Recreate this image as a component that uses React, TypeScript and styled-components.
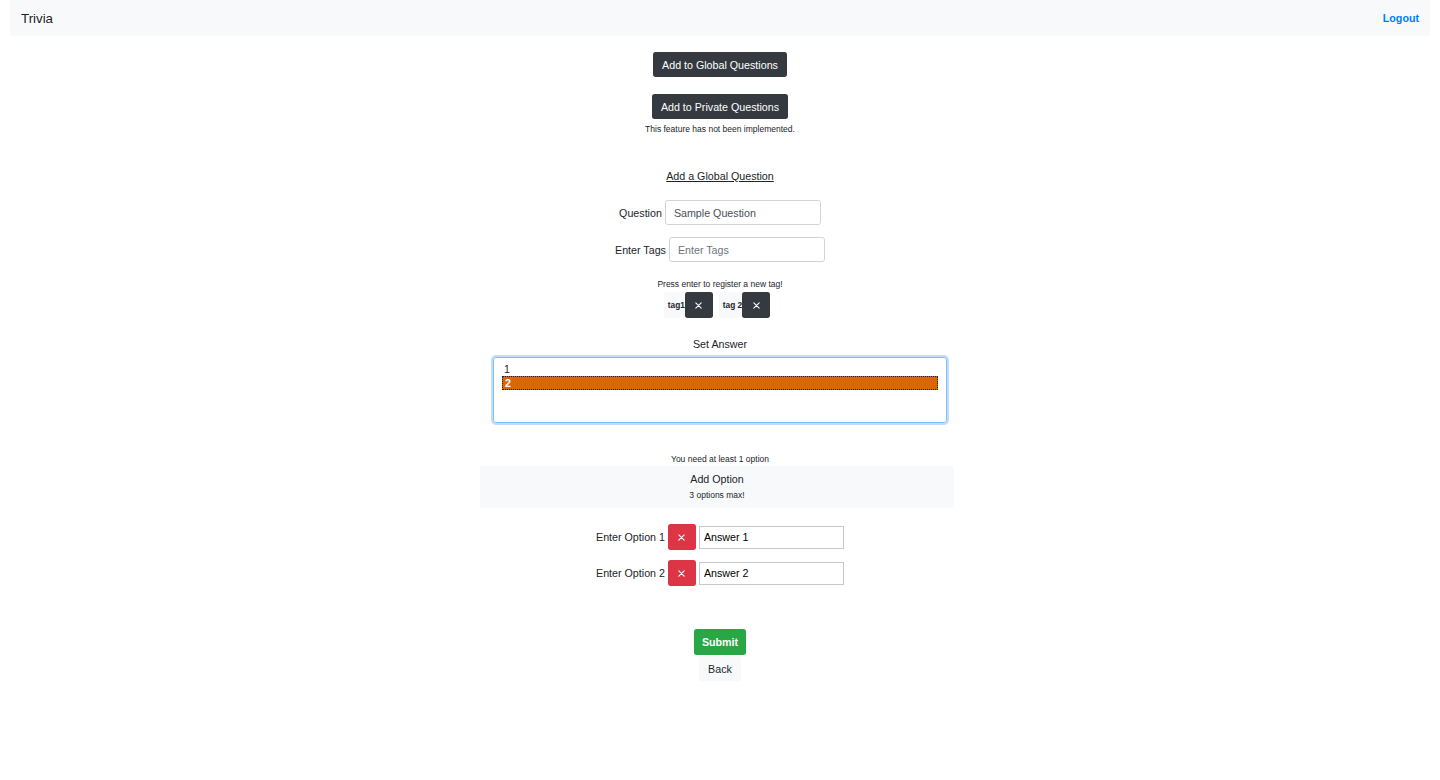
import React from 'react';
import styled, { createGlobalStyle } from 'styled-components';

const GlobalStyle = createGlobalStyle`
  html, body {
    margin: 0;
    padding: 0;
    background: #fff;
  }
  body {
    font-family: "Liberation Sans", Arial, sans-serif;
    font-size: 10.7px;
    color: #212529;
  }
`;

const Navbar = styled.nav`
  margin: 0 10px;
  height: 36px;
  background: #f8f9fa;
  display: flex;
  align-items: center;
  justify-content: space-between;
  padding: 0 11px;
`;

const Brand = styled.span`
  font-size: 13.3px;
  color: rgba(0, 0, 0, 0.9);
`;

const NavLink = styled.a`
  font-size: 10.7px;
  font-weight: 700;
  color: #007bff;
  text-decoration: none;
`;

const Main = styled.main`
  display: flex;
  flex-direction: column;
  align-items: center;
  padding-top: 16px;
`;

const Button = styled.button<{ variant?: 'dark' | 'danger' | 'success' | 'light'; mt?: number }>`
  border: none;
  border-radius: 2.7px;
  font-family: inherit;
  font-size: 10.7px;
  height: 25px;
  padding: 0 9px;
  margin-top: ${({ mt }) => mt ?? 0}px;
  cursor: pointer;
  display: inline-flex;
  align-items: center;
  justify-content: center;
  color: ${({ variant }) => (variant === 'light' ? '#212529' : '#fff')};
  background: ${({ variant }) =>
    variant === 'danger' ? '#dc3545' : variant === 'success' ? '#28a745' : variant === 'light' ? '#f8f9fa' : '#343a40'};
`;

const SubmitButton = styled(Button)`
  height: 26px;
  padding: 0 8px;
  font-weight: 700;
`;

const Small = styled.div<{ mt?: number }>`
  font-size: 8.5px;
  line-height: 12px;
  margin-top: ${({ mt }) => mt ?? 0}px;
`;

const SectionTitle = styled.div`
  margin-top: 33px;
  font-size: 10.7px;
  text-decoration: underline;
  line-height: 16px;
`;

const FieldRow = styled.div<{ mt: number }>`
  display: flex;
  align-items: center;
  gap: 3px;
  margin-top: ${({ mt }) => mt}px;
`;

const Label = styled.label`
  font-size: 10.7px;
`;

const TextInput = styled.input`
  width: 156px;
  height: 25px;
  box-sizing: border-box;
  border: 1px solid #ced4da;
  border-radius: 2.7px;
  padding: 0 8px;
  font-family: inherit;
  font-size: 10.7px;
  color: #495057;
  &::placeholder {
    color: #6c757d;
  }
`;

const TagList = styled.div`
  display: flex;
  gap: 6px;
  margin-top: 2px;
  margin-right: 6px;
`;

const Tag = styled.div`
  display: flex;
  align-items: center;
  background: #f8f9fa;
  border-radius: 2.7px;
  padding-left: 4px;
  font-size: 8.3px;
  font-weight: 700;
`;

const IconButton = styled(Button)`
  width: 28px;
  height: 26px;
  padding: 0;
`;

const SetAnswer = styled.div`
  margin-top: 19px;
  line-height: 14px;
`;

const ListBox = styled.div`
  margin-top: 6px;
  width: 454px;
  height: 66px;
  box-sizing: border-box;
  border: 1px solid #80bdff;
  border-radius: 3px;
  box-shadow: 0 0 0 2px rgba(0, 123, 255, 0.25);
  padding: 5px 8px;
  font-size: 10.7px;
  line-height: 13px;
`;

const ListOption = styled.div<{ selected?: boolean }>`
  padding-left: 2px;
  height: ${({ selected }) => (selected ? '14px' : '13px')};
  box-sizing: border-box;
  color: ${({ selected }) => (selected ? '#fff' : '#212529')};
  font-weight: ${({ selected }) => (selected ? 700 : 400)};
  background: ${({ selected }) => (selected ? '#d9670a' : 'transparent')};
  border: ${({ selected }) => (selected ? '1px dotted #0b1a6b' : 'none')};
  line-height: 12px;
`;

const AddOptionBox = styled.div`
  width: 474px;
  height: 42px;
  margin-top: 1px;
  margin-right: 6px;
  background: #f8f9fa;
  border-radius: 3px;
  display: flex;
  flex-direction: column;
  align-items: center;
  justify-content: center;
  gap: 4px;
`;

const OptionRow = styled.div<{ mt: number }>`
  display: flex;
  align-items: center;
  gap: 3px;
  margin-top: ${({ mt }) => mt}px;
`;

const PlainInput = styled.input`
  width: 145px;
  height: 23px;
  box-sizing: border-box;
  border: 1px solid #c8c8c8;
  padding: 0 4px;
  font-family: inherit;
  font-size: 10.7px;
  color: #000;
`;

const Cross = () => (
  <svg width="9" height="9" viewBox="0 0 10 10" fill="none" stroke="#fff" strokeWidth="1.2" strokeLinecap="round">
    <path d="M2 2 L8 8 M8 2 L2 8" />
  </svg>
);

export default function App() {
  return (
    <>
      <GlobalStyle />
      <Navbar>
        <Brand>Trivia</Brand>
        <NavLink href="#">Logout</NavLink>
      </Navbar>
      <Main>
        <Button variant="dark">Add to Global Questions</Button>
        <Button variant="dark" mt={17}>Add to Private Questions</Button>
        <Small mt={4}>This feature has not been implemented.</Small>
        <SectionTitle>Add a Global Question</SectionTitle>
        <FieldRow mt={16}>
          <Label>Question</Label>
          <TextInput defaultValue="Sample Question" />
        </FieldRow>
        <FieldRow mt={12}>
          <Label>Enter Tags</Label>
          <TextInput placeholder="Enter Tags" />
        </FieldRow>
        <Small mt={16}>Press enter to register a new tag!</Small>
        <TagList>
          <Tag>
            tag1
            <IconButton variant="dark"><Cross /></IconButton>
          </Tag>
          <Tag>
            tag 2
            <IconButton variant="dark"><Cross /></IconButton>
          </Tag>
        </TagList>
        <SetAnswer>Set Answer</SetAnswer>
        <ListBox>
          <ListOption>1</ListOption>
          <ListOption selected>2</ListOption>
        </ListBox>
        <Small mt={30}>You need at least 1 option</Small>
        <AddOptionBox>
          <div>Add Option</div>
          <Small>3 options max!</Small>
        </AddOptionBox>
        <OptionRow mt={16}>
          <Label>Enter Option 1</Label>
          <IconButton variant="danger"><Cross /></IconButton>
          <PlainInput defaultValue="Answer 1" />
        </OptionRow>
        <OptionRow mt={10}>
          <Label>Enter Option 2</Label>
          <IconButton variant="danger"><Cross /></IconButton>
          <PlainInput defaultValue="Answer 2" />
        </OptionRow>
        <SubmitButton variant="success" mt={43}>Submit</SubmitButton>
        <Button variant="light" mt={1}>Back</Button>
      </Main>
    </>
  );
}
